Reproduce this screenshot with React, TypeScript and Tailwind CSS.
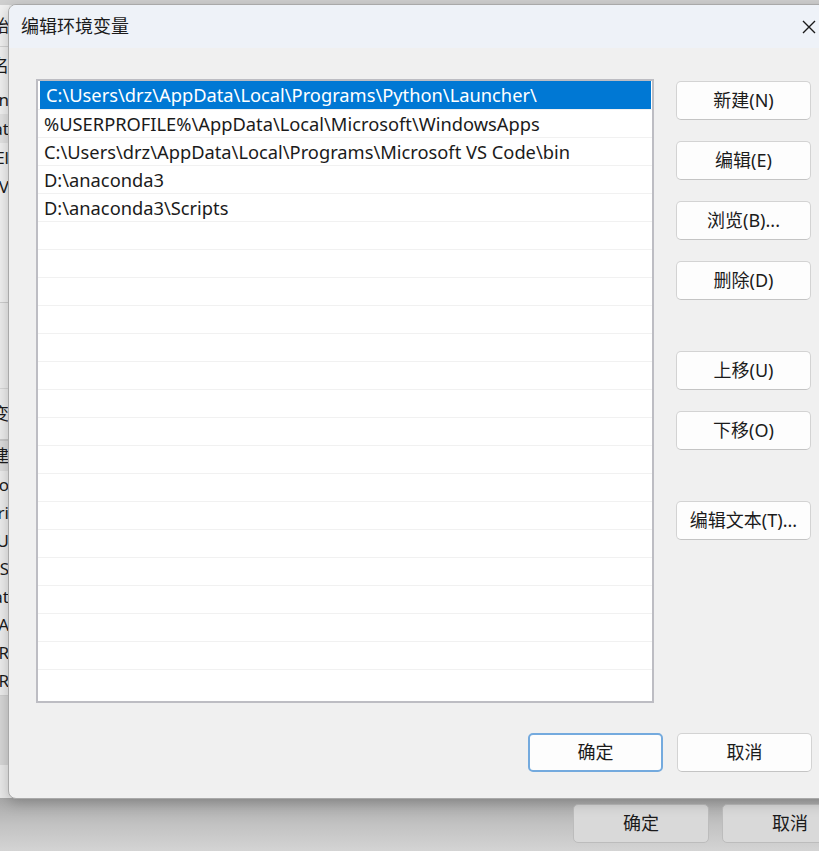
import React from 'react';

const PATHS = [
  'C:\\Users\\drz\\AppData\\Local\\Programs\\Python\\Launcher\\',
  '%USERPROFILE%\\AppData\\Local\\Microsoft\\WindowsApps',
  'C:\\Users\\drz\\AppData\\Local\\Programs\\Microsoft VS Code\\bin',
  'D:\\anaconda3',
  'D:\\anaconda3\\Scripts',
];

const TOTAL_ROWS = 22;

// edge of the window that sits behind the dialog: only ~8px of it shows
const UserRows = ['n', 'at', 'El', 'V'];
const SysRows = ['o', 'ri', 'U', 'S', 'at', 'A', 'R', 'R'];

function Clip({ text, className = '' }: { text: string; className?: string }) {
  return (
    <div className={`flex justify-end overflow-hidden w-[9px] whitespace-nowrap ${className}`}>
      <span>{text}</span>
    </div>
  );
}

function BehindWindow() {
  return (
    <div className="absolute inset-0 bg-[#e9e9e9] flex flex-col text-[17px] text-[#1b1b1b]">
      <div className="h-[5px] bg-[#cfcfcf]" />
      <div className="w-[9px] flex flex-col bg-[#f0f0f0]">
        <div className="h-[42px] flex items-center border-b border-[#d2d2d2]">
          <Clip text="始" />
        </div>
        <div className="h-[38px] flex items-center">
          <Clip text="名" />
        </div>
        {UserRows.map((t, i) => (
          <div key={i} className={`h-[29px] flex items-center ${i === 1 ? 'bg-[#e2e2e2]' : ''}`}>
            <Clip text={t} />
          </div>
        ))}
        <div className="h-[102px] border-b border-[#cdcdcd]" />
      </div>
      <div className="w-[9px] flex flex-col bg-[#ececec]">
        <div className="h-[86px] border-b border-[#d6d6d6]" />
        <div className="h-[52px] flex items-center border-b-2 border-[#c8c8c8]">
          <Clip text="变" />
        </div>
        <div className="h-[30px] flex items-center bg-[#dcdcdc]">
          <Clip text="建" />
        </div>
        {SysRows.map((t, i) => (
          <div key={i} className="h-[28px] flex items-center">
            <Clip text={t} />
          </div>
        ))}
        <div className="h-[70px] border-t border-[#cfcfcf] bg-[#d6d6d6]" />
      </div>
      <div className="flex-1" />
    </div>
  );
}

function BehindButtons() {
  return (
    <div className="absolute left-[573px] top-[804px] flex gap-[13px] text-[18px] text-[#1b1b1b]">
      <div className="w-[136px] h-[39px] rounded-[5px] border border-[#bcbcbc] bg-[#d9d9d9] flex items-center justify-center">
        确定
      </div>
      <div className="w-[136px] h-[39px] rounded-[5px] border border-[#bcbcbc] bg-[#d9d9d9] flex items-center justify-center">
        取消
      </div>
    </div>
  );
}

function Btn({ label, primary = false }: { label: string; primary?: boolean }) {
  return (
    <button
      type="button"
      className={`w-[135px] h-[39px] rounded-[5px] bg-[#fdfdfd] flex items-center justify-center text-[18px] text-[#1b1b1b] ${
        primary ? 'border-2 border-[#74aade]' : 'border border-[#d3d3d3] border-b-[#c4c4c4]'
      }`}
    >
      {label}
    </button>
  );
}

export default function App() {
  return (
    <div className="relative w-[819px] h-[851px] overflow-hidden bg-[#c9c9c9] font-['Noto_Sans','Noto_Sans_CJK_SC',sans-serif]">
      <BehindWindow />
      <div className="absolute inset-x-0 top-[798px] bottom-0 bg-[linear-gradient(to_bottom,#a8a8a8,#c2c2c2_50%,#d4d4d4)]" />
      <BehindButtons />

      {/* 编辑环境变量 dialog */}
      <div className="absolute left-[8px] top-[4px] w-[830px] h-[795px] rounded-l-[8px] border border-[#a9a9a9] bg-[#f0f0f0] flex flex-col shadow-[0_4px_14px_rgba(0,0,0,0.22)] overflow-hidden">
        <div className="h-[43px] shrink-0 bg-[#eef2f8] flex items-center pl-[12px] pr-[18px]">
          <span className="text-[18px] text-[#1b1b1b]">编辑环境变量</span>
          <div className="flex-1" />
          <svg width="14" height="14" viewBox="0 0 14 14" className="mr-[3px] mt-[1px]">
            <path d="M1 1 L13 13 M13 1 L1 13" stroke="#1a1a1a" strokeWidth="1.4" />
          </svg>
        </div>

        <div className="pl-[27px] pt-[31px] w-[803px] flex flex-col">
          <div className="flex gap-[22px]">
            <div className="w-[618px] h-[624px] border-2 border-[#bdbdc3] bg-white">
              {Array.from({ length: TOTAL_ROWS }).map((_, i) => (
                <div
                  key={i}
                  className={`h-[28px] flex items-center pl-[6px] text-[18.3px] whitespace-nowrap ${
                    i === 0
                      ? 'bg-[#0078d4] text-white ml-[2px] mr-[1px] pl-[4px]'
                      : 'text-[#1b1b1b] border-t border-[#f1f1f1]'
                  }`}
                >
                  {PATHS[i] ?? ''}
                </div>
              ))}
            </div>

            <div className="flex flex-col pt-[2px]">
              <div className="flex flex-col gap-[21px]">
                <Btn label="新建(N)" />
                <Btn label="编辑(E)" />
                <Btn label="浏览(B)..." />
                <Btn label="删除(D)" />
              </div>
              <div className="flex flex-col gap-[21px] mt-[51px]">
                <Btn label="上移(U)" />
                <Btn label="下移(O)" />
              </div>
              <div className="mt-[51px]">
                <Btn label="编辑文本(T)..." />
              </div>
            </div>
          </div>

          <div className="flex justify-end gap-[14px] mt-[30px]">
            <Btn label="确定" primary />
            <Btn label="取消" />
          </div>
        </div>
      </div>
    </div>
  );
}
